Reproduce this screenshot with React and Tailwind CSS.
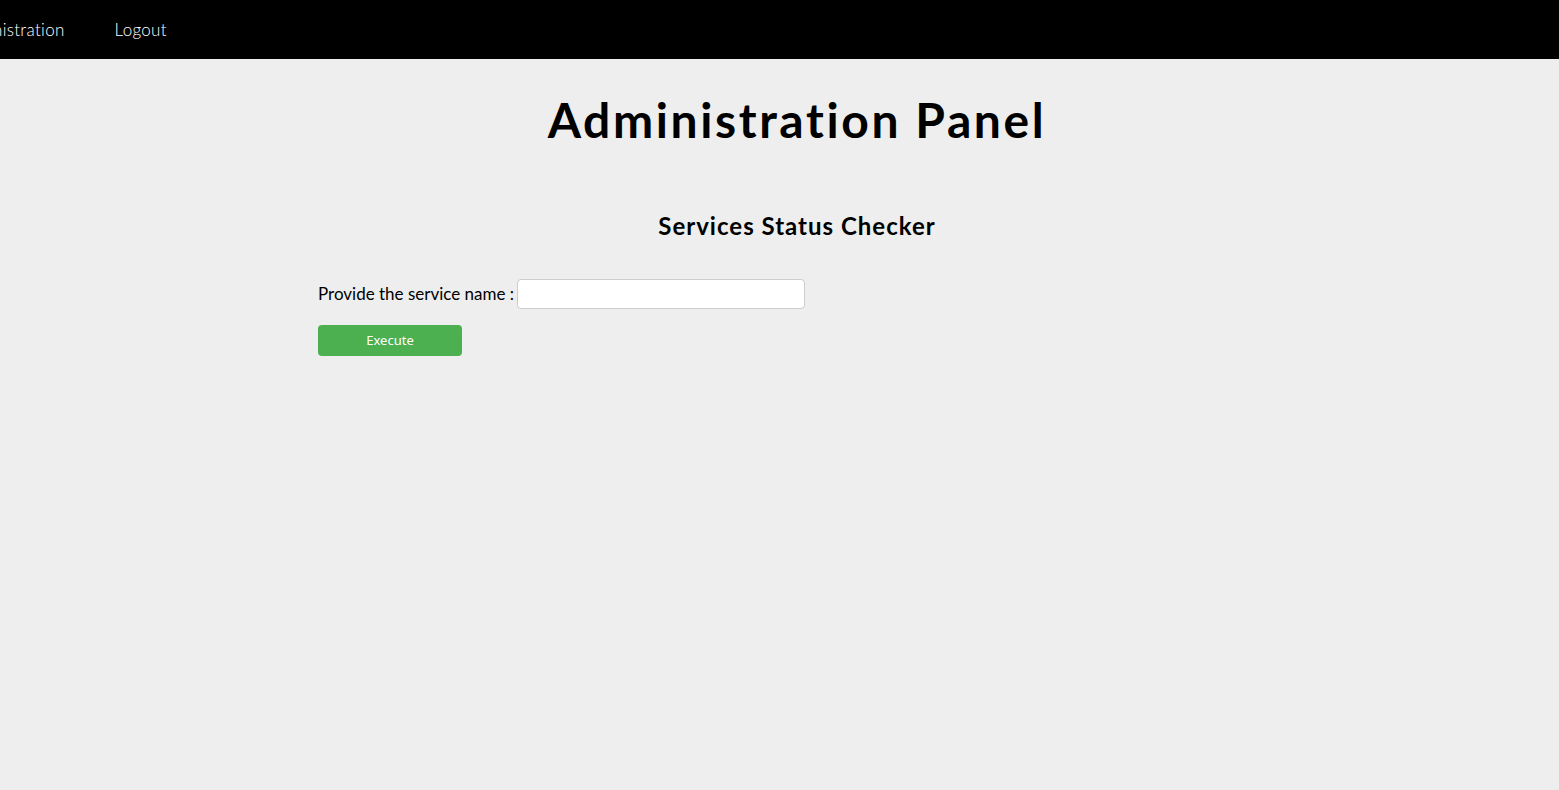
import React from 'react'

export default function App() {
    return (
        <div className="min-h-[790px] bg-[#eeeeee] font-['Lato',sans-serif] text-black">
            {/* top nav */}
            <nav className="flex h-[59px] items-center bg-black text-[17px] font-light tracking-[0.3px] text-white">
                <a href="#" className="-ml-[46px] mr-[50px]">Administration</a>
                <a href="#">Logout</a>
            </nav>

            <div className="ml-[318px] w-[958px]">
                <h1 className="mt-[28px] text-center text-[48px] leading-[66px] font-bold tracking-[2.6px]">
                    Administration Panel
                </h1>

                <h2 className="mt-[57px] text-center text-[24px] leading-[32px] font-bold tracking-[1px]">
                    Services Status Checker
                </h2>

                <form className="mt-[37px]" onSubmit={(e) => e.preventDefault()}>
                    <div className="flex items-center">
                        <label className="text-[17px]">Provide the service name :</label>
                        <input
                            type="text"
                            className="ml-[3px] h-[30px] w-[288px] rounded-[4px] border border-[#cccccc] bg-white px-2"
                        />
                    </div>
                    <button
                        type="submit"
                        className="mt-[16px] h-[31px] w-[144px] rounded-[4px] bg-[#4caf50] font-['Noto_Sans',sans-serif] text-[13px] text-white"
                    >
                        Execute
                    </button>
                </form>
            </div>
        </div>
    )
}
